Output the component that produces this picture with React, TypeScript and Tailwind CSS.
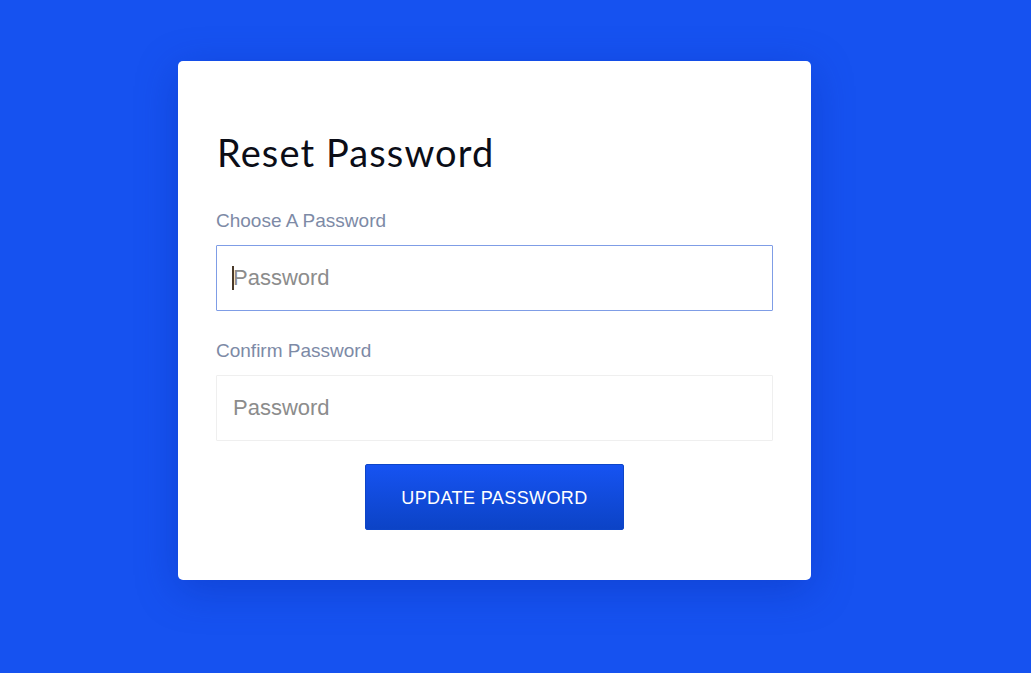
import React from "react";

export default function App() {
  return (
    <div className="min-h-screen w-full bg-[#1652f0] overflow-hidden" style={{ height: 673 }}>
      <div className="ml-[178px] pt-[61px]">
        <div className="w-[633px] bg-white rounded-[5px] shadow-[0_10px_40px_rgba(10,40,160,0.35)] px-[38px] pt-[69px] pb-[50px]">
          <h1 className="text-[38px] leading-[44px] text-[#0b0d17] font-normal tracking-[1.1px] mb-[36px] pl-[1px]" style={{ fontFamily: "Lato, 'Noto Sans', sans-serif" }}>
            Reset Password
          </h1>
          <form className="flex flex-col" style={{ fontFamily: "'Liberation Sans', Arial, sans-serif" }} onSubmit={(e) => e.preventDefault()}>
            <label className="text-[19px] leading-[22px] text-[#7d8aa6] mb-[13px]">Choose A Password</label>
            <div className="relative">
              <input
                type="password"
                placeholder="Password"
                className="h-[66px] w-full border border-[#7f9de6] rounded-[1px] px-[16px] text-[22px] text-[#333] placeholder:text-[#8c8c8c] outline-none"
              />
              <span className="absolute left-[16px] top-[21px] h-[24px] w-[1.5px] bg-[#4a3a2a]" />
            </div>
            <label className="text-[19px] leading-[22px] text-[#7d8aa6] mt-[29px] mb-[13px]">Confirm Password</label>
            <input
              type="password"
              placeholder="Password"
              className="h-[66px] w-full border border-[#efefef] rounded-[1px] px-[16px] text-[22px] text-[#333] placeholder:text-[#8c8c8c] outline-none"
            />
            <div className="flex justify-center mt-[23px]">
              <button
                type="submit"
                className="w-[259px] h-[66px] pt-[3px] rounded-[2px] bg-gradient-to-b from-[#1653f2] to-[#0c43c6] text-white text-[18px] tracking-[0.4px] border border-[#0d45c8]"
              >
                UPDATE PASSWORD
              </button>
            </div>
          </form>
        </div>
      </div>
    </div>
  );
}
